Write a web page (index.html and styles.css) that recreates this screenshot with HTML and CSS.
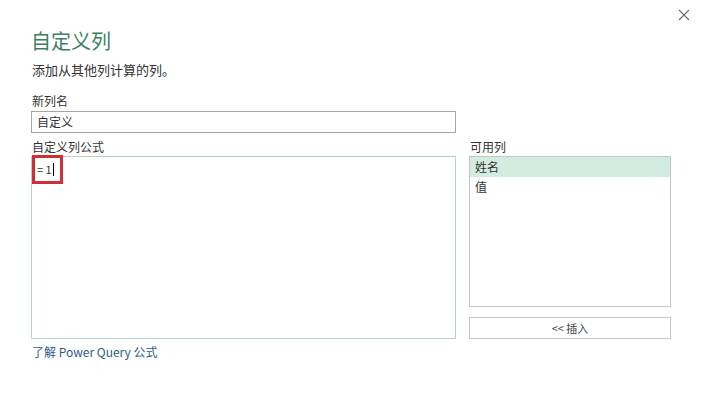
FILE: index.html
```html
<!DOCTYPE html>
<html lang="zh">
<head>
<meta charset="utf-8">
<link rel="stylesheet" href="styles.css">
</head>
<body>
<div class="dialog">
  <button class="close" aria-label="关闭">
    <svg width="12" height="12" viewBox="0 0 12 12"><path d="M1 1L11 11M11 1L1 11" stroke="#6b6b6b" stroke-width="1.1" fill="none"/></svg>
  </button>
  <h1 class="title">自定义列</h1>
  <p class="subtitle">添加从其他列计算的列。</p>
  <div class="label">新列名</div>
  <div class="input">自定义</div>
  <div class="main">
    <div class="left">
      <div class="label">自定义列公式</div>
      <div class="formula">
        <span class="formula-text">= 1<span class="caret"></span></span>
        <div class="highlight"></div>
      </div>
    </div>
    <div class="right">
      <div class="label">可用列</div>
      <div class="list">
        <div class="item selected">姓名</div>
        <div class="item">值</div>
      </div>
      <div class="insert">&lt;&lt; 插入</div>
    </div>
  </div>
  <a class="link">了解 Power Query 公式</a>
</div>
</body>
</html>
```

FILE: styles.css
```css
html, body {
  margin: 0;
  padding: 0;
  background: #ffffff;
}
body {
  font-family: "Noto Sans CJK SC", "Noto Sans", sans-serif;
  color: #333333;
}
.dialog {
  position: relative;
  width: 702px;
  height: 395px;
  box-sizing: border-box;
  padding: 27px 0 0 31px;
}
.close {
  position: absolute;
  top: 8px;
  right: 11px;
  width: 14px;
  height: 14px;
  padding: 1px;
  border: 0;
  background: none;
}
.title {
  margin: 0;
  font-size: 20px;
  font-weight: normal;
  line-height: 28px;
  color: #3d7f60;
}
.subtitle {
  margin: 5px 0 0 1px;
  font-size: 13px;
  line-height: 20px;
}
.label {
  font-size: 12px;
  line-height: 16px;
  margin-left: 1px;
}
.subtitle + .label {
  margin-top: 13px;
}
.input {
  margin-top: 2px;
  width: 425px;
  height: 22px;
  box-sizing: border-box;
  border: 1px solid #a6a6a6;
  font-size: 12px;
  line-height: 20px;
  padding-left: 5px;
}
.main {
  display: flex;
  gap: 13px;
  margin-top: 6px;
}
.left {
  width: 425px;
}
.right {
  width: 202px;
}
.formula {
  position: relative;
  margin-top: 1px;
  height: 183px;
  box-sizing: border-box;
  border: 1px solid #b4d2cc;
  padding: 4px 0 0 5px;
  font-size: 11px;
  line-height: 16px;
}
.formula-text {
  display: inline-flex;
  align-items: center;
  gap: 1px;
}
.caret {
  display: inline-block;
  width: 1px;
  height: 13px;
  background: #000;
}
.highlight {
  position: absolute;
  left: 0;
  top: -2px;
  width: 31px;
  height: 29px;
  box-sizing: border-box;
  border: 3px solid #d02f35;
}
.list {
  margin-top: 1px;
  height: 151px;
  box-sizing: border-box;
  border: 1px solid #c6c6c6;
  padding: 0;
}
.item {
  height: 20px;
  font-size: 12px;
  line-height: 20px;
  padding-left: 5px;
}
.item.selected {
  background: #d2ecdf;
}
.insert {
  margin-top: 10px;
  height: 22px;
  box-sizing: border-box;
  border: 1px solid #c6c6c6;
  font-size: 11px;
  line-height: 20px;
  text-align: center;
  color: #444;
}
.link {
  display: block;
  margin-top: 5px;
  margin-left: 1px;
  font-size: 12px;
  line-height: 16px;
  color: #2e5c87;
}
```
